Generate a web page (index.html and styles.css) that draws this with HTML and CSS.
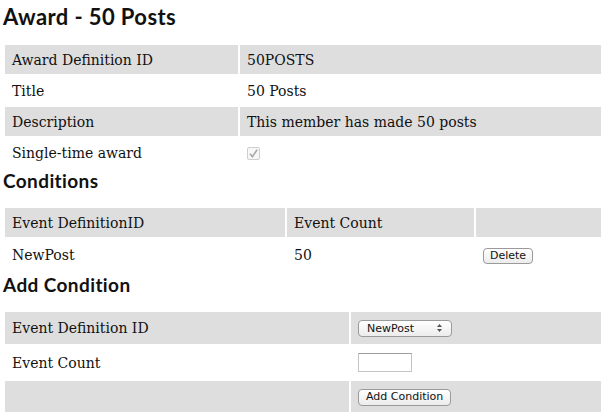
FILE: index.html
```html
<!DOCTYPE html>
<html lang="en">
<head>
  <meta charset="UTF-8" />
  <title>Award - 50 Posts</title>
  <link rel="stylesheet" href="styles.css">
</head>
<body>
  <h1>Award - 50 Posts</h1>
  <table class="details">
    <tr class="alt">
      <td class="label">Award Definition ID</td>
      <td>50POSTS</td>
    </tr>
    <tr>
      <td class="label">Title</td>
      <td>50 Posts</td>
    </tr>
    <tr class="alt">
      <td class="label">Description</td>
      <td>This member has made 50 posts</td>
    </tr>
    <tr>
      <td class="label">Single-time award</td>
      <td>
        <span class="check">
          <svg width="13" height="13" viewBox="0 0 13 13">
            <rect x="0.5" y="0.5" width="12" height="12" rx="1.5" fill="#f7f7f7" stroke="#cfcfcf"/>
            <path d="M3 6.8 L5.4 9.6 L10.2 2.6" fill="none" stroke="#a8a8a8" stroke-width="1.6"/>
          </svg>
        </span>
      </td>
    </tr>
  </table>

  <h2>Conditions</h2>
  <table class="conditions">
    <tr class="alt">
      <td class="c1">Event DefinitionID</td>
      <td class="c2">Event Count</td>
      <td class="c3"></td>
    </tr>
    <tr class="with-btn">
      <td>NewPost</td>
      <td>50</td>
      <td><button class="btn btn-small" type="button">Delete</button></td>
    </tr>
  </table>

  <h2>Add Condition</h2>
  <form class="add-form">
    <table class="add">
      <tr class="alt">
        <td class="a1">Event Definition ID</td>
        <td>
          <span class="select-wrap">
            <select name="definition">
              <option>NewPost</option>
            </select>
            <svg class="arrows" width="5" height="8" viewBox="0 0 5 8">
              <path d="M0 3 L2.5 0 L5 3 Z M0 5 L2.5 8 L5 5 Z" fill="#555"/>
            </svg>
          </span>
        </td>
      </tr>
      <tr>
        <td>Event Count</td>
        <td><input class="count" type="text" name="count" /></td>
      </tr>
      <tr class="alt">
        <td></td>
        <td><button class="btn" type="submit">Add Condition</button></td>
      </tr>
    </table>
  </form>
</body>
</html>
```

FILE: styles.css
```css
body {
  margin: 0;
  padding: 0 3px;
  font-family: "DejaVu Serif", Georgia, serif;
  font-size: 14px;
  color: #111;
  background: #fff;
}

h1,
h2 {
  font-family: Lato, "Trebuchet MS", sans-serif;
  font-weight: bold;
  color: #111;
  margin: 0;
  letter-spacing: 0.4px;
}

h1 {
  font-size: 22px;
  line-height: 28px;
  padding-top: 3px;
  margin-bottom: 12px;
}

h2 {
  font-size: 19px;
  line-height: 24px;
  margin-bottom: 13px;
}

table {
  width: 600px;
  border-spacing: 2px;
  table-layout: fixed;
}

td {
  padding: 0 7px;
  height: 29px;
  vertical-align: middle;
}

tr.alt td {
  background: #dedede;
}

.details .label {
  width: 219px;
}

.check {
  display: inline-block;
  vertical-align: middle;
  line-height: 0;
}

.conditions .c1 {
  width: 266px;
}

.conditions .c2 {
  width: 173px;
}

.conditions .with-btn td {
  height: 32px;
}

.add-form {
  margin: 0;
}

.add .a1 {
  width: 330px;
}

.add tr:first-child td {
  height: 32px;
}

.add tr:nth-child(2) td {
  height: 33px;
}

.add tr:nth-child(3) td {
  height: 31px;
}

.btn {
  font-family: "DejaVu Sans", "Lucida Grande", sans-serif;
  font-size: 11px;
  color: #111;
  height: 17px;
  padding: 0 7px;
  border: 1px solid #9a9a9a;
  border-radius: 4px;
  background: linear-gradient(#ffffff, #ececec);
  line-height: 14px;
}

.btn-small {
  height: 16px;
  padding: 0 6px;
}

.select-wrap {
  position: relative;
  display: inline-block;
  vertical-align: middle;
}

.select-wrap select {
  appearance: none;
  -webkit-appearance: none;
  font-family: "DejaVu Sans", "Lucida Grande", sans-serif;
  font-size: 11px;
  color: #111;
  width: 94px;
  height: 17px;
  padding: 0 0 0 8px;
  border: 1px solid #9a9a9a;
  border-radius: 4px;
  background: linear-gradient(#ffffff, #ececec);
}

.select-wrap .arrows {
  position: absolute;
  right: 10px;
  top: 5px;
}

.count {
  width: 52px;
  height: 17px;
  padding: 0;
  border: 1px solid #c4c4c4;
  border-top-color: #9f9f9f;
  vertical-align: middle;
}
```
